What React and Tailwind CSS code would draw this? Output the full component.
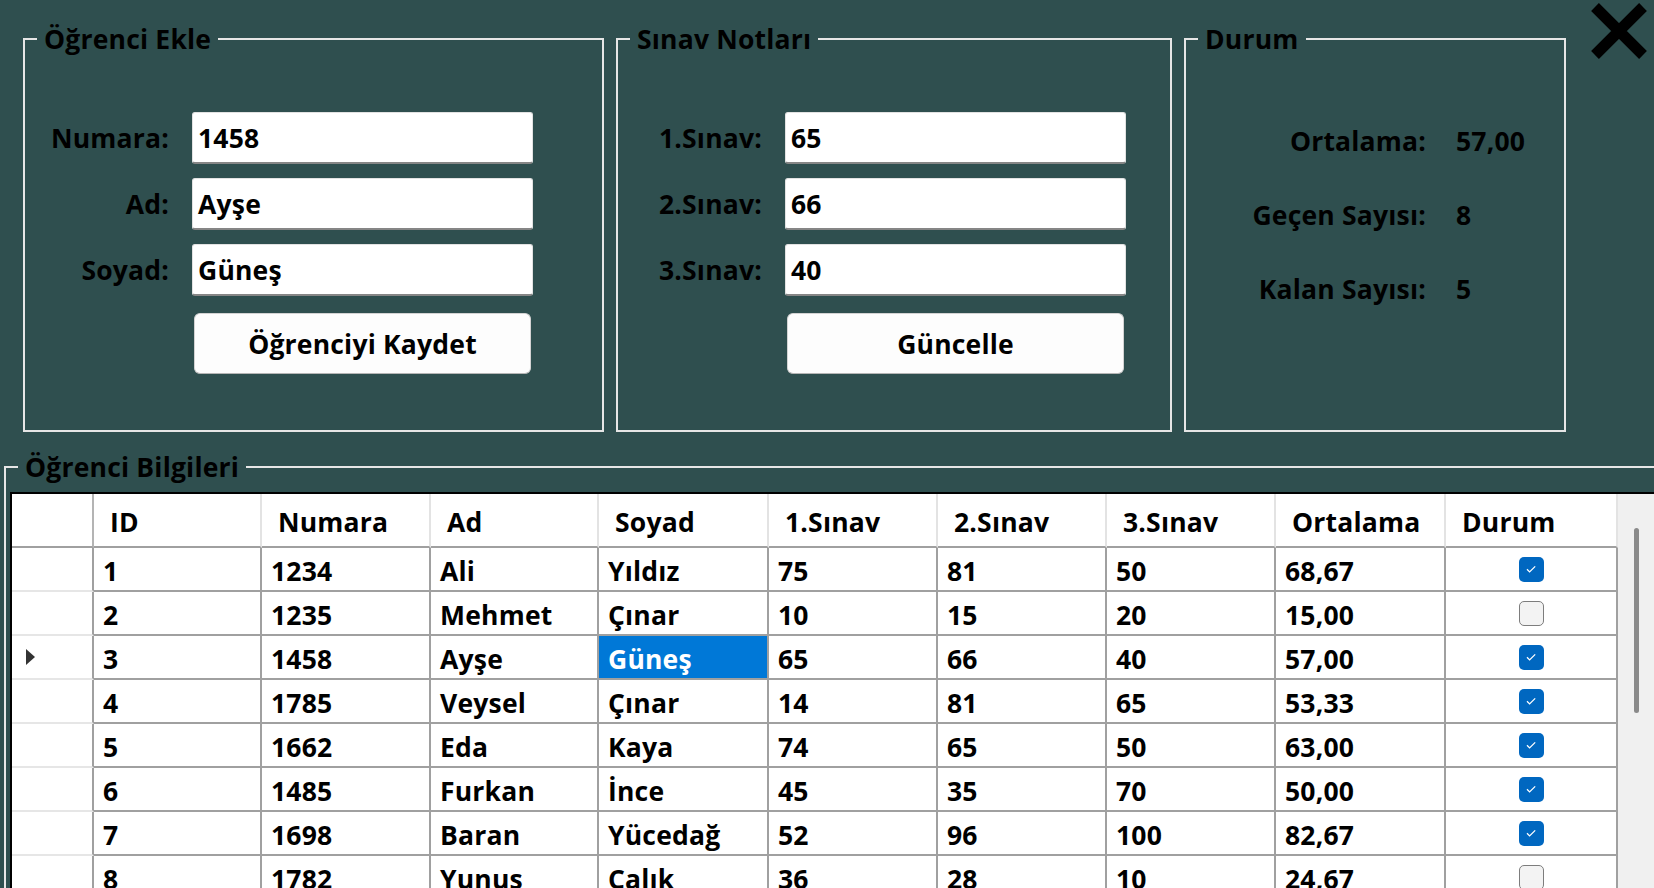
import React from 'react';

const rows = [
    { id: 1, no: '1234', ad: 'Ali', soyad: 'Yıldız', s1: '75', s2: '81', s3: '50', ort: '68,67', ok: true },
    { id: 2, no: '1235', ad: 'Mehmet', soyad: 'Çınar', s1: '10', s2: '15', s3: '20', ort: '15,00', ok: false },
    { id: 3, no: '1458', ad: 'Ayşe', soyad: 'Güneş', s1: '65', s2: '66', s3: '40', ort: '57,00', ok: true },
    { id: 4, no: '1785', ad: 'Veysel', soyad: 'Çınar', s1: '14', s2: '81', s3: '65', ort: '53,33', ok: true },
    { id: 5, no: '1662', ad: 'Eda', soyad: 'Kaya', s1: '74', s2: '65', s3: '50', ort: '63,00', ok: true },
    { id: 6, no: '1485', ad: 'Furkan', soyad: 'İnce', s1: '45', s2: '35', s3: '70', ort: '50,00', ok: true },
    { id: 7, no: '1698', ad: 'Baran', soyad: 'Yücedağ', s1: '52', s2: '96', s3: '100', ort: '82,67', ok: true },
    { id: 8, no: '1782', ad: 'Yunus', soyad: 'Çalık', s1: '36', s2: '28', s3: '10', ort: '24,67', ok: false },
];

const headers = ['ID', 'Numara', 'Ad', 'Soyad', '1.Sınav', '2.Sınav', '3.Sınav', 'Ortalama', 'Durum'];

// group box: title sits on the top border line
const GroupBox = ({ title, className, children }) => (
    <div className={`border-2 border-[#e6e6e6] ${className}`}>
        <div className="-mt-[19px] ml-[12px] w-fit px-[7px] bg-[#2f4f4f] leading-[36px] text-black">
            {title}
        </div>
        {children}
    </div>
);

const TextBox = ({ value }) => (
    <div className="h-[52px] bg-white rounded-[3px] border border-[#e2e2e2] border-b-2 border-b-[#868686] px-[5px] flex items-center leading-[36px] text-black">
        {value}
    </div>
);

const FormGrid = ({ fields, button }) => (
    <div className="mt-[55px] grid grid-cols-[144px_341px] gap-x-[23px] gap-y-[14px] items-center">
        {fields.map(([label, value]) => (
            <React.Fragment key={label}>
                <div className="text-right leading-[36px] text-black">{label}</div>
                <TextBox value={value} />
            </React.Fragment>
        ))}
        <button className="col-start-2 mt-[3px] ml-[2px] w-[337px] h-[61px] bg-[#fdfdfd] rounded-[6px] border border-[#d3d3d3] border-b-[#b5b5b5] text-black leading-[36px]">
            {button}
        </button>
    </div>
);

const CheckBox = ({ checked }) =>
    checked ? (
        <div className="w-[25px] h-[25px] rounded-[5px] bg-[#0067c0] flex items-center justify-center">
            <svg width="14" height="14" viewBox="0 0 14 14">
                <path d="M3 7.3l2.6 2.6L11.2 4.4" stroke="white" strokeWidth="1.3" fill="none" />
            </svg>
        </div>
    ) : (
        <div className="w-[25px] h-[25px] rounded-[5px] bg-[#f3f3f3] border-[1.5px] border-[#7d7d7d]" />
    );

const App = () => {
    return (
        <div className="w-[1654px] h-[888px] overflow-hidden bg-[#2f4f4f] font-['Open_Sans',sans-serif] font-bold text-[26.5px] tracking-[0.2px]">
            {/* Top row: three group boxes and close button */}
            <div className="flex items-start pl-[23px] pt-[3px]">
                <GroupBox title="Öğrenci Ekle" className="mt-[35px] w-[581px] h-[394px]">
                    <FormGrid
                        fields={[['Numara:', '1458'], ['Ad:', 'Ayşe'], ['Soyad:', 'Güneş']]}
                        button="Öğrenciyi Kaydet"
                    />
                </GroupBox>
                <GroupBox title="Sınav Notları" className="mt-[35px] ml-[12px] w-[556px] h-[394px]">
                    <FormGrid
                        fields={[['1.Sınav:', '65'], ['2.Sınav:', '66'], ['3.Sınav:', '40']]}
                        button="Güncelle"
                    />
                </GroupBox>
                <GroupBox title="Durum" className="mt-[35px] ml-[12px] w-[382px] h-[394px]">
                    <div className="mt-[66px] flex flex-col gap-[38px]">
                        {[['Ortalama:', '57,00'], ['Geçen Sayısı:', '8'], ['Kalan Sayısı:', '5']].map(([l, v]) => (
                            <div key={l} className="grid grid-cols-[240px_auto] gap-x-[30px] leading-[36px] text-black">
                                <div className="text-right">{l}</div>
                                <div>{v}</div>
                            </div>
                        ))}
                    </div>
                </GroupBox>
                <button className="ml-[25px]">
                    <svg width="56" height="56" viewBox="0 0 56 56">
                        <path d="M4 4L52 52M52 4L4 52" stroke="black" strokeWidth="11" />
                    </svg>
                </button>
            </div>

            {/* Student list */}
            <div className="mt-[34px] ml-[4px] border-l-2 border-t-2 border-[#e6e6e6] h-[500px]">
                <div className="-mt-[19px] ml-[12px] w-fit px-[7px] bg-[#2f4f4f] leading-[36px] text-black">
                    Öğrenci Bilgileri
                </div>
                <div className="mt-[7px] ml-[4px] border-t-2 border-l-2 border-black bg-white flex h-[500px]">
                    <div className="grid grid-cols-[82px_168px_169px_168px_170px_169px_169px_169px_170px_172px] auto-rows-min text-black">
                        {/* header */}
                        <div className="h-[54px] border-r-2 border-r-[#b4b4b4] border-b-2 border-b-[#a0a0a0]" />
                        {headers.map((h) => (
                            <div key={h} className="h-[54px] border-r-2 border-r-[#e3e3e3] border-b-2 border-b-[#a0a0a0] pl-[16px] pt-[4px] flex items-center leading-[36px]">
                                {h}
                            </div>
                        ))}
                        {/* rows */}
                        {rows.map((r) => {
                            const cells = [r.id, r.no, r.ad, r.soyad, r.s1, r.s2, r.s3, r.ort];
                            return (
                                <React.Fragment key={r.id}>
                                    <div className="h-[44px] border-r-2 border-r-[#a0a0a0] border-b-2 border-b-[#e6e6e6] flex items-center pl-[14px]">
                                        {r.id === 3 && (
                                            <svg width="9" height="16" viewBox="0 0 9 16">
                                                <path d="M0 0L9 8L0 16Z" fill="#333" />
                                            </svg>
                                        )}
                                    </div>
                                    {cells.map((c, i) => {
                                        const selected = r.id === 3 && i === 3;
                                        return (
                                            <div
                                                key={i}
                                                className={`h-[44px] border-r-2 border-b-2 border-[#a0a0a0] pl-[9px] pt-[3px] flex items-center leading-[36px] ${selected ? 'bg-[#0078d7] text-white' : ''}`}
                                            >
                                                {c}
                                            </div>
                                        );
                                    })}
                                    <div className="h-[44px] border-r-2 border-b-2 border-[#a0a0a0] flex items-center justify-center">
                                        <CheckBox checked={r.ok} />
                                    </div>
                                </React.Fragment>
                            );
                        })}
                    </div>
                    {/* scrollbar */}
                    <div className="flex-1 bg-[#f0f0f0] pl-[16px] pt-[34px]">
                        <div className="w-[5px] h-[185px] rounded-full bg-[#8a8a8a]" />
                    </div>
                </div>
            </div>
        </div>
    );
};

export default App;
